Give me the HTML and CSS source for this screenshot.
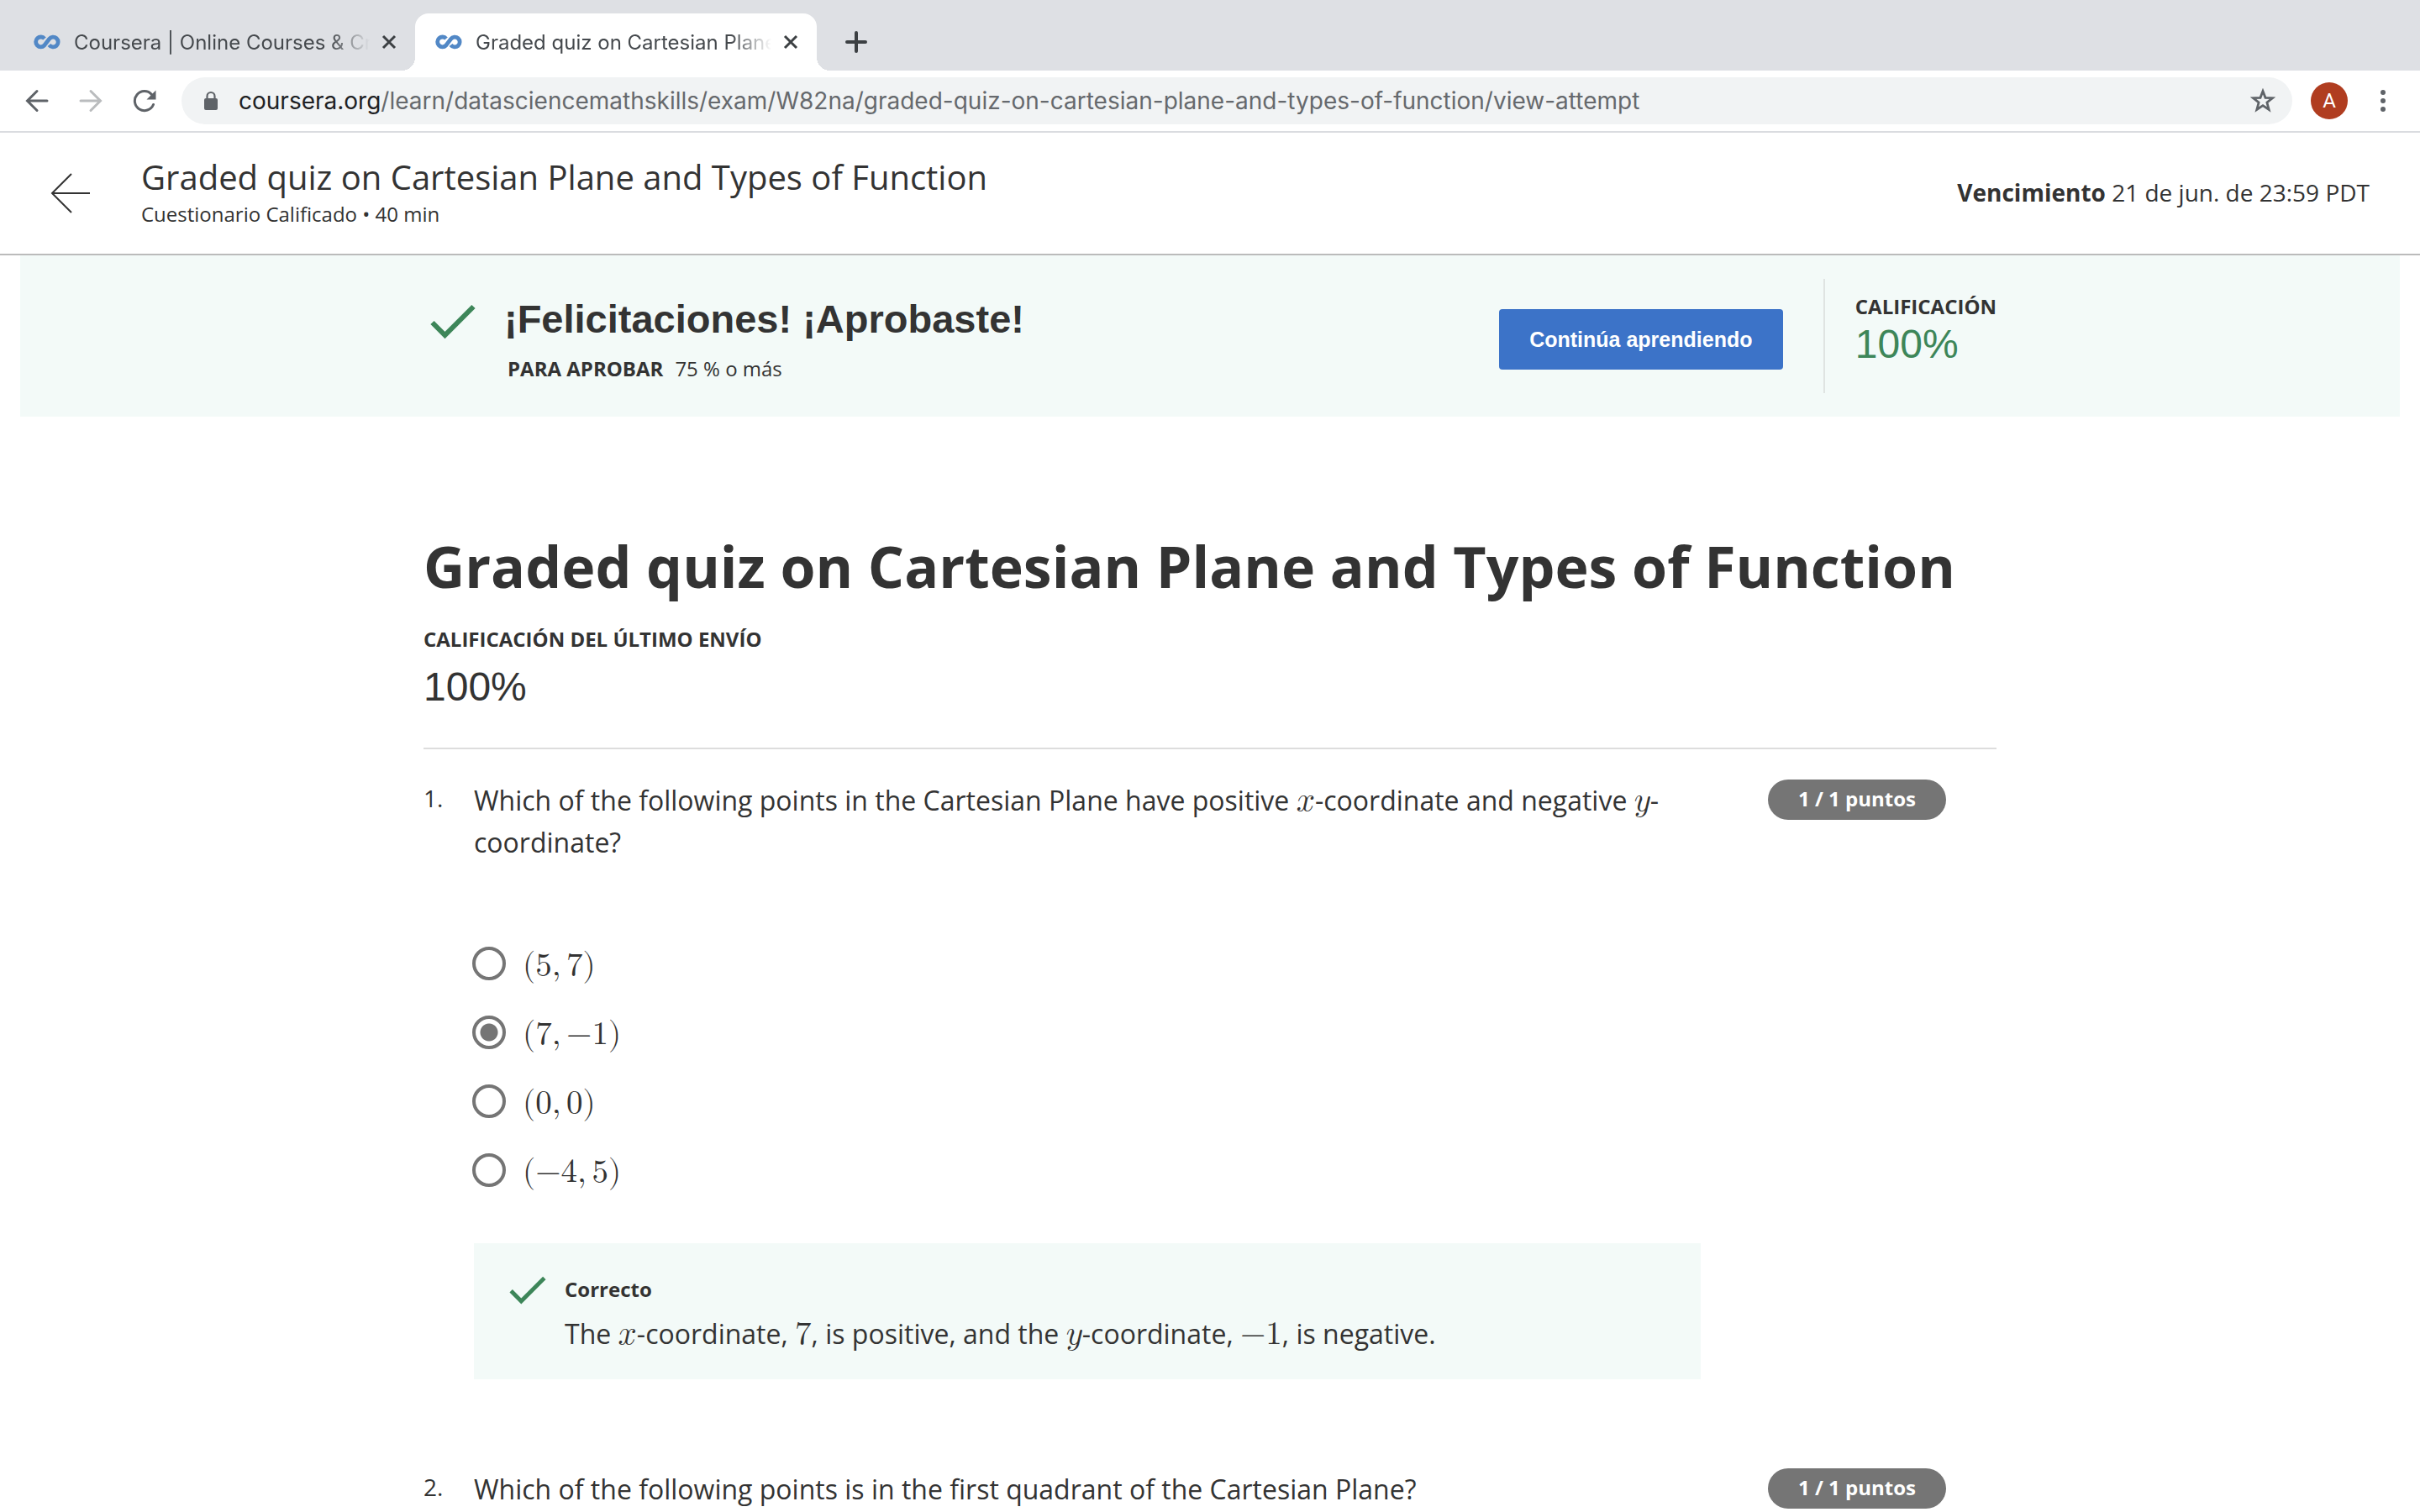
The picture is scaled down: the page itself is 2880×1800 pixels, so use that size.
FILE: index.html
```html
<!DOCTYPE html>
<html lang="es">
<head>
<meta charset="utf-8">
<title>Graded quiz on Cartesian Plane and Types of Function</title>
<link rel="stylesheet" href="styles.css">
</head>
<body>
<svg class="sprite" aria-hidden="true">
  <symbol id="logo" viewBox="0 0 32 18">
    <g fill="none" stroke="#5288c6" stroke-width="4.800">
      <path d="M13 5A5.900 5.900 0 1 0 12.800 13L18.500 5.500A5.900 5.900 0 1 1 18.500 12.500"/>
    </g>
  </symbol>
  <symbol id="close" viewBox="0 0 18 18"><path d="M2 2l14 14M16 2L2 16" fill="none" stroke="#3c4043" stroke-width="3"/></symbol>
  <symbol id="check" viewBox="0 0 54 42"><path d="M2.500 22L17.500 37L51.500 3" fill="none" stroke="#3d8659" stroke-width="6"/></symbol>
</svg>

<header class="browser">
  <div class="tabstrip">
    <div class="tab">
      <svg class="favicon"><use href="#logo"/></svg>
      <span class="tab-title">Coursera | Online Courses &amp; Cr</span>
      <button class="icon-button" aria-label="Cerrar pestaña"><svg class="close"><use href="#close"/></svg></button>
    </div>
    <div class="tab tab-active">
      <svg class="favicon"><use href="#logo"/></svg>
      <span class="tab-title">Graded quiz on Cartesian Plane</span>
      <button class="icon-button" aria-label="Cerrar pestaña"><svg class="close"><use href="#close"/></svg></button>
    </div>
    <button class="icon-button new-tab" aria-label="Nueva pestaña">
      <svg width="26" height="26" viewBox="0 0 26 26"><path d="M13 2v22M2 13h22" stroke="#3c4043" stroke-width="4" stroke-linecap="round"/></svg>
    </button>
  </div>
  <div class="toolbar">
    <nav class="nav">
      <button class="icon-button" aria-label="Atrás"><svg width="28" height="28" viewBox="0 0 28 28"><path d="M26 14H3M14 2.500L2.500 14L14 25.500" fill="none" stroke="#5f6368" stroke-width="3" stroke-linecap="round"/></svg></button>
      <button class="icon-button" aria-label="Adelante"><svg width="28" height="28" viewBox="0 0 28 28"><path d="M2 14H25M14 2.500L25.500 14L14 25.500" fill="none" stroke="#babcbe" stroke-width="3" stroke-linecap="round"/></svg></button>
      <button class="icon-button" aria-label="Recargar"><svg width="28" height="28" viewBox="0 0 28 28"><path d="M24.500 18.500A11.500 11.500 0 1 1 22.500 6.500" fill="none" stroke="#5f6368" stroke-width="3" stroke-linecap="round"/><path d="M27.500 1.500v11H16.500z" fill="#5f6368"/></svg></button>
    </nav>
    <div class="address">
      <svg width="18" height="24" viewBox="0 0 18 24"><path d="M4.500 10V6.500a4.500 4.500 0 0 1 9 0V10" fill="none" stroke="#5f6368" stroke-width="2.200"/><rect x="1" y="9" width="16" height="14" rx="2" fill="#5f6368"/></svg>
      <span class="url"><span class="host">coursera.org</span>/learn/datasciencemathskills/exam/W82na/graded-quiz-on-cartesian-plane-and-types-of-function/view-attempt</span>
      <button class="icon-button" aria-label="Marcador"><svg width="30" height="30" viewBox="0 0 30 30"><path d="M15 3.500L18 11.300L26.500 11.700L19.900 17L22.200 25.500L15 20.700L7.800 25.500L10.100 17L3.500 11.700L12 11.300Z" fill="none" stroke="#5f6368" stroke-width="2.800"/></svg></button>
    </div>
    <button class="avatar" aria-label="Perfil">A</button>
    <button class="icon-button" aria-label="Menú"><svg width="8" height="28" viewBox="0 0 8 28" fill="#5f6368"><circle cx="4" cy="4" r="3"/><circle cx="4" cy="14" r="3"/><circle cx="4" cy="24" r="3"/></svg></button>
  </div>
</header>

<header class="course-bar">
  <a class="back" href="#" aria-label="Volver"><svg width="48" height="48" viewBox="0 0 48 48"><path d="M47 24H3M25 1L2 24L25 47" fill="none" stroke="#333" stroke-width="2"/></svg></a>
  <div class="course-text">
    <p class="course-title">Graded quiz on Cartesian Plane and Types of Function</p>
    <p class="course-sub">Cuestionario Calificado • 40 min</p>
  </div>
  <p class="due"><strong>Vencimiento</strong> 21 de jun. de 23:59 PDT</p>
</header>

<section class="banner">
  <div class="banner-inner">
    <svg class="banner-check"><use href="#check"/></svg>
    <div class="banner-text">
      <h2>¡Felicitaciones! ¡Aprobaste!</h2>
      <p class="pass"><strong>PARA APROBAR</strong><span>75 % o más</span></p>
    </div>
    <button class="continue">Continúa aprendiendo</button>
    <div class="grade">
      <strong class="label">CALIFICACIÓN</strong>
      <span class="score">100%</span>
    </div>
  </div>
</section>

<main class="quiz">
  <h1>Graded quiz on Cartesian Plane and Types of Function</h1>
  <strong class="label">CALIFICACIÓN DEL ÚLTIMO ENVÍO</strong>
  <p class="last-score">100%</p>

  <section class="question">
    <span class="number">1.</span>
    <div class="body">
      <p class="prompt" id="q1">Which of the following points in the Cartesian Plane have positive <math><mi>x</mi></math>-coordinate and negative <math><mi>y</mi></math>-coordinate?</p>
      <div class="options" role="radiogroup" aria-labelledby="q1">
        <label><input type="radio" name="q1"><math><mo stretchy="false">(</mo><mn>5</mn><mo>,</mo><mn>7</mn><mo stretchy="false">)</mo></math></label>
        <label><input type="radio" name="q1" checked><math><mo stretchy="false">(</mo><mn>7</mn><mo>,</mo><mo form="prefix">−</mo><mn>1</mn><mo stretchy="false">)</mo></math></label>
        <label><input type="radio" name="q1"><math><mo stretchy="false">(</mo><mn>0</mn><mo>,</mo><mn>0</mn><mo stretchy="false">)</mo></math></label>
        <label><input type="radio" name="q1"><math><mo stretchy="false">(</mo><mo form="prefix">−</mo><mn>4</mn><mo>,</mo><mn>5</mn><mo stretchy="false">)</mo></math></label>
      </div>
      <div class="feedback">
        <svg class="feedback-check"><use href="#check"/></svg>
        <div class="feedback-text">
          <strong class="label">Correcto</strong>
          <p class="prompt">The <math><mi>x</mi></math>-coordinate, <math><mn>7</mn></math>, is positive, and the <math><mi>y</mi></math>-coordinate, <math><mo form="prefix">−</mo><mn>1</mn></math>, is negative.</p>
        </div>
      </div>
    </div>
    <span class="points">1 / 1 puntos</span>
  </section>

  <section class="question">
    <span class="number">2.</span>
    <div class="body">
      <p class="prompt">Which of the following points is in the first quadrant of the Cartesian Plane?</p>
    </div>
    <span class="points">1 / 1 puntos</span>
  </section>
</main>
</body>
</html>
```
FILE: styles.css
```css
* { box-sizing: border-box; }
html, body { height: 100%; }
body {
  margin: 0;
  overflow: hidden;
  background: #fff;
  color: #333;
  font-family: "Open Sans", sans-serif;
}
p, h1, h2 { margin: 0; }
button { font: inherit; border: 0; padding: 0; background: none; }
svg { display: block; flex: none; }
.sprite { position: absolute; width: 0; height: 0; }
.icon-button { display: flex; flex: none; }
.label { display: block; font-size: 24px; line-height: 36px; }

/* Browser chrome */
.browser { font-family: Inter, sans-serif; border-bottom: 2px solid #dadce0; }
.tabstrip { display: flex; align-items: flex-end; height: 84px; background: #dee0e4; padding-left: 16px; }
.tab {
  position: relative;
  display: flex;
  align-items: center;
  width: 478px;
  height: 68px;
  padding: 0 22px 0 24px;
  font-size: 24px;
  color: #45494d;
}
.tab-active { background: #fff; border-radius: 16px 16px 0 0; }
.tab-active::before, .tab-active::after {
  content: "";
  position: absolute;
  bottom: 0;
  width: 16px;
  height: 16px;
}
.tab-active::before { right: 100%; background: radial-gradient(circle at 0 0, #dee0e4 16px, #fff 16px); }
.tab-active::after { left: 100%; background: radial-gradient(circle at 100% 0, #dee0e4 16px, #fff 16px); }
.favicon { width: 32px; height: 18px; margin-right: 16px; }
.tab-title {
  flex: 1;
  overflow: hidden;
  white-space: nowrap;
  margin-right: 14px;
  mask-image: linear-gradient(to right, #000 calc(100% - 48px), transparent);
}
.close { width: 18px; height: 18px; }
.new-tab { align-self: center; margin: 16px 0 0 34px; }
.toolbar { display: flex; align-items: center; height: 72px; padding: 0 40px 0 30px; }
.nav { display: flex; gap: 36px; margin-right: 30px; }
.address {
  flex: 1;
  display: flex;
  align-items: center;
  height: 56px;
  padding: 0 20px 0 26px;
  border-radius: 28px;
  background: #f1f3f4;
}
.url { flex: 1; margin-left: 24px; font-size: 28px; color: #66696d; white-space: nowrap; }
.host { color: #202124; }
.avatar {
  width: 44px;
  height: 44px;
  margin: 0 38px 0 22px;
  border-radius: 50%;
  background: #b03d20;
  color: #fff;
  font-family: Roboto, sans-serif;
  font-size: 24px;
}

/* Course header */
.course-bar {
  display: flex;
  align-items: center;
  height: 146px;
  padding: 0 60px;
  border-bottom: 2px solid #bbb;
}
.back { margin-right: 60px; }
.course-text { flex: 1; padding-bottom: 2px; }
.course-title { font-size: 40px; line-height: 52px; }
.course-sub { font-size: 24px; line-height: 36px; }
.due { padding-bottom: 2px; font-size: 28px; }

/* Result banner */
.banner { margin: 0 24px; background: #f3faf8; }
.banner-inner { display: flex; width: 1872px; margin: 0 auto; padding: 28px 0; }
.banner-check { width: 54px; height: 42px; margin: 30px 34px 0 8px; }
.banner-text { flex: 1; padding-top: 20px; }
.banner-text h2 { font: bold 47px/56px "Liberation Sans", Arial, sans-serif; }
.pass { display: flex; gap: 14px; margin-top: 13px; padding-left: 4px; font-size: 24px; line-height: 36px; }
.continue {
  width: 338px;
  height: 72px;
  margin: 36px 48px 0 0;
  border-radius: 4px;
  background: #3c73c8;
  color: #fff;
  font: bold 25px "Liberation Sans", Arial, sans-serif;
}
.grade { height: 136px; padding: 15px 0 0 36px; border-left: 2px solid #dfe4e2; }
.score, .last-score { display: block; font: 48px/54px "Liberation Sans", Arial, sans-serif; }
.score { color: #3d8659; }

/* Quiz */
.quiz { width: 1872px; margin: 0 auto; padding-top: 132px; }
.quiz h1 { font-size: 68px; line-height: 92px; margin-bottom: 23px; }
.last-score { padding: 12px 0 46px; border-bottom: 2px solid #ddd; height: 113px; }
.question { display: flex; align-items: flex-start; margin-top: 36px; }
.number { flex: none; width: 60px; font-size: 28px; line-height: 44px; }
.body { width: 1460px; margin-right: 80px; }
.prompt { font-size: 32px; line-height: 50px; }
.question .body > .prompt { max-width: 1430px; }
math { font-size: 39px; line-height: 1; }
.options { display: grid; gap: 32px; margin-top: 94px; margin-left: -2px; }
.options label { display: flex; align-items: center; height: 50px; gap: 20px; }
.options math { padding-top: 8px; }
.options input {
  appearance: none;
  width: 40px;
  height: 40px;
  margin: 0;
  border: 4px solid #757575;
  border-radius: 50%;
  background: #fff;
}
.options input:checked { background: radial-gradient(circle, #757575 10px, #fff 11px); }
.feedback { display: flex; margin-top: 62px; padding: 37px 42px 29px; background: #f3faf8; }
.feedback-check { width: 44px; height: 34px; margin: 2px 22px 0 0; }
.feedback-text { display: grid; gap: 10px; }
.points {
  width: 212px;
  height: 48px;
  border-radius: 24px;
  background: #757575;
  color: #fff;
  font-size: 24px;
  font-weight: bold;
  line-height: 46px;
  text-align: center;
}
.question + .question { margin-top: 106px; }
```
